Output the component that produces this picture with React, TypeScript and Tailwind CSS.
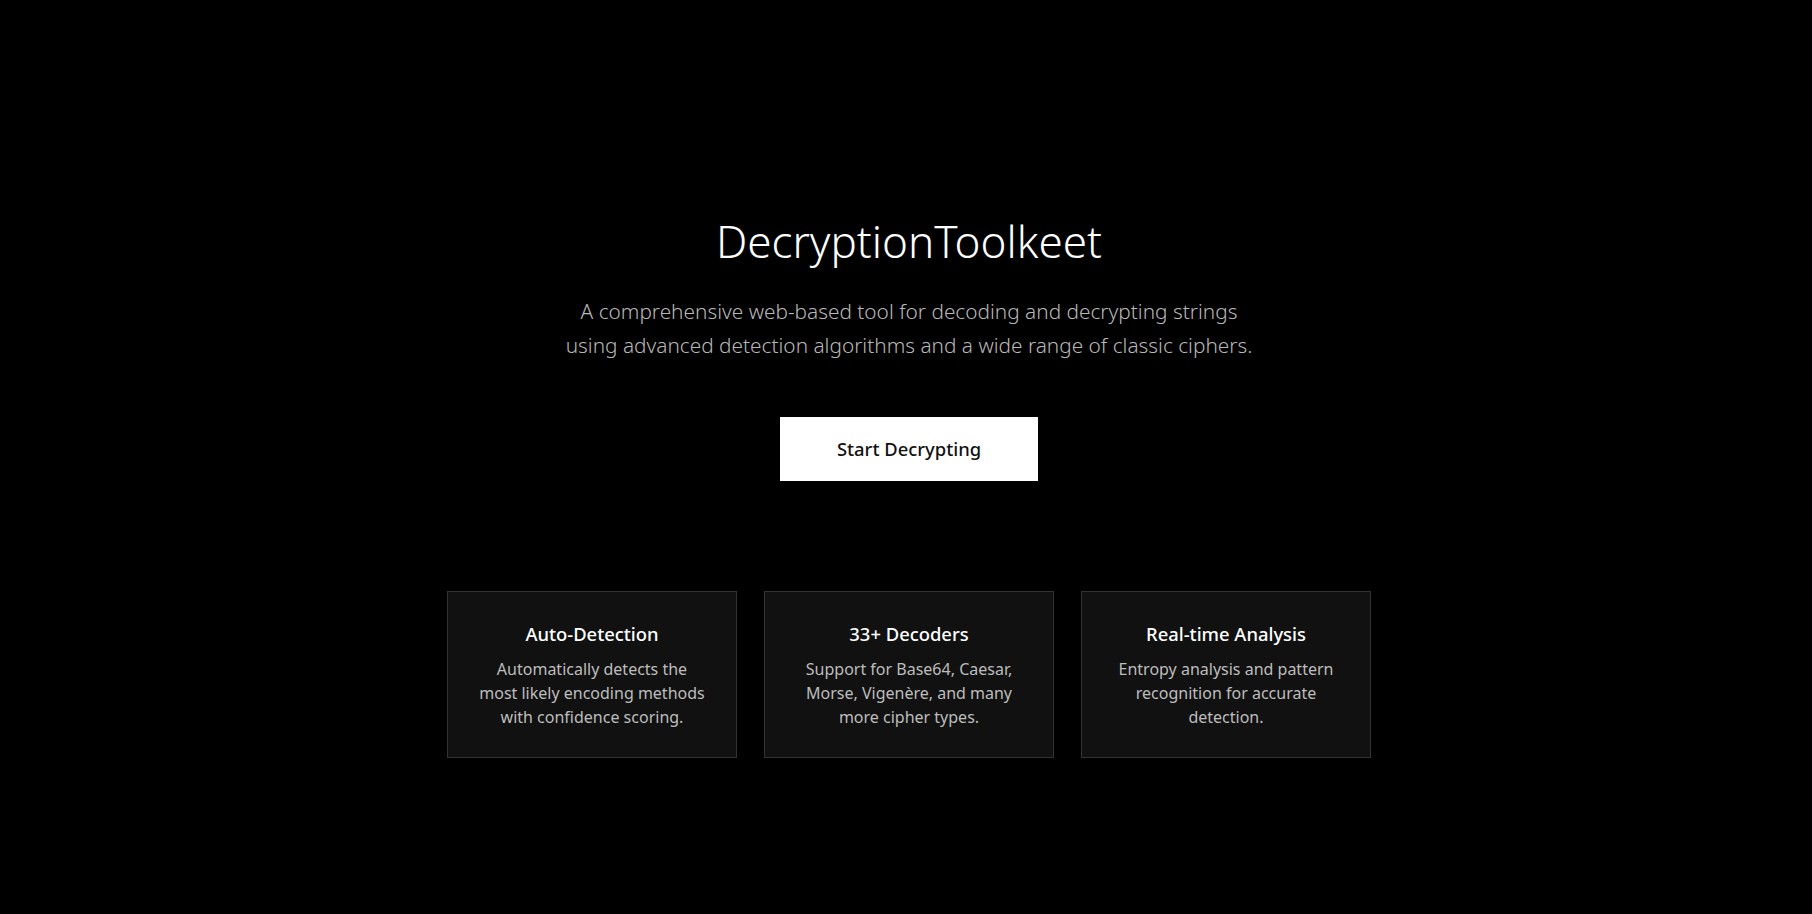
import React from "react"

interface Feature {
  title: string
  description: string
}

const features: Feature[] = [
  {
    title: "Auto-Detection",
    description: "Automatically detects the most likely encoding methods with confidence scoring.",
  },
  {
    title: "33+ Decoders",
    description: "Support for Base64, Caesar, Morse, Vigenère, and many more cipher types.",
  },
  {
    title: "Real-time Analysis",
    description: "Entropy analysis and pattern recognition for accurate detection.",
  },
]

export default function App() {
  return (
    <div className="min-h-screen w-full bg-black text-white font-['Noto_Sans',sans-serif]">
      <main className="flex flex-col items-center pt-[219px] pb-[156px] pl-[6px]">
        <h1 className="text-[44px] leading-none font-light text-white mb-[31px]">DecryptionToolkeet</h1>

        <p className="max-w-[690px] text-center text-[20.8px] leading-[34px] font-light text-[#b8b8b8] mb-[55px]">
          A comprehensive web-based tool for decoding and decrypting strings using advanced detection algorithms and a
          wide range of classic ciphers.
        </p>

        <button className="bg-white text-[#111111] text-[18.4px] leading-7 font-medium px-[57px] py-[18px]">
          Start Decrypting
        </button>

        <div className="mt-[110px] grid w-[924px] grid-cols-3 gap-[27px]">
          {features.map((feature) => (
            <div key={feature.title} className="border border-[#333333] bg-[#111111] px-7 pt-7 pb-7 text-center">
              <h3 className="text-[18.4px] leading-7 font-medium text-white mb-[9px]">{feature.title}</h3>
              <p className="text-base leading-6 text-[#bdbdbd]">{feature.description}</p>
            </div>
          ))}
        </div>
      </main>
    </div>
  )
}
